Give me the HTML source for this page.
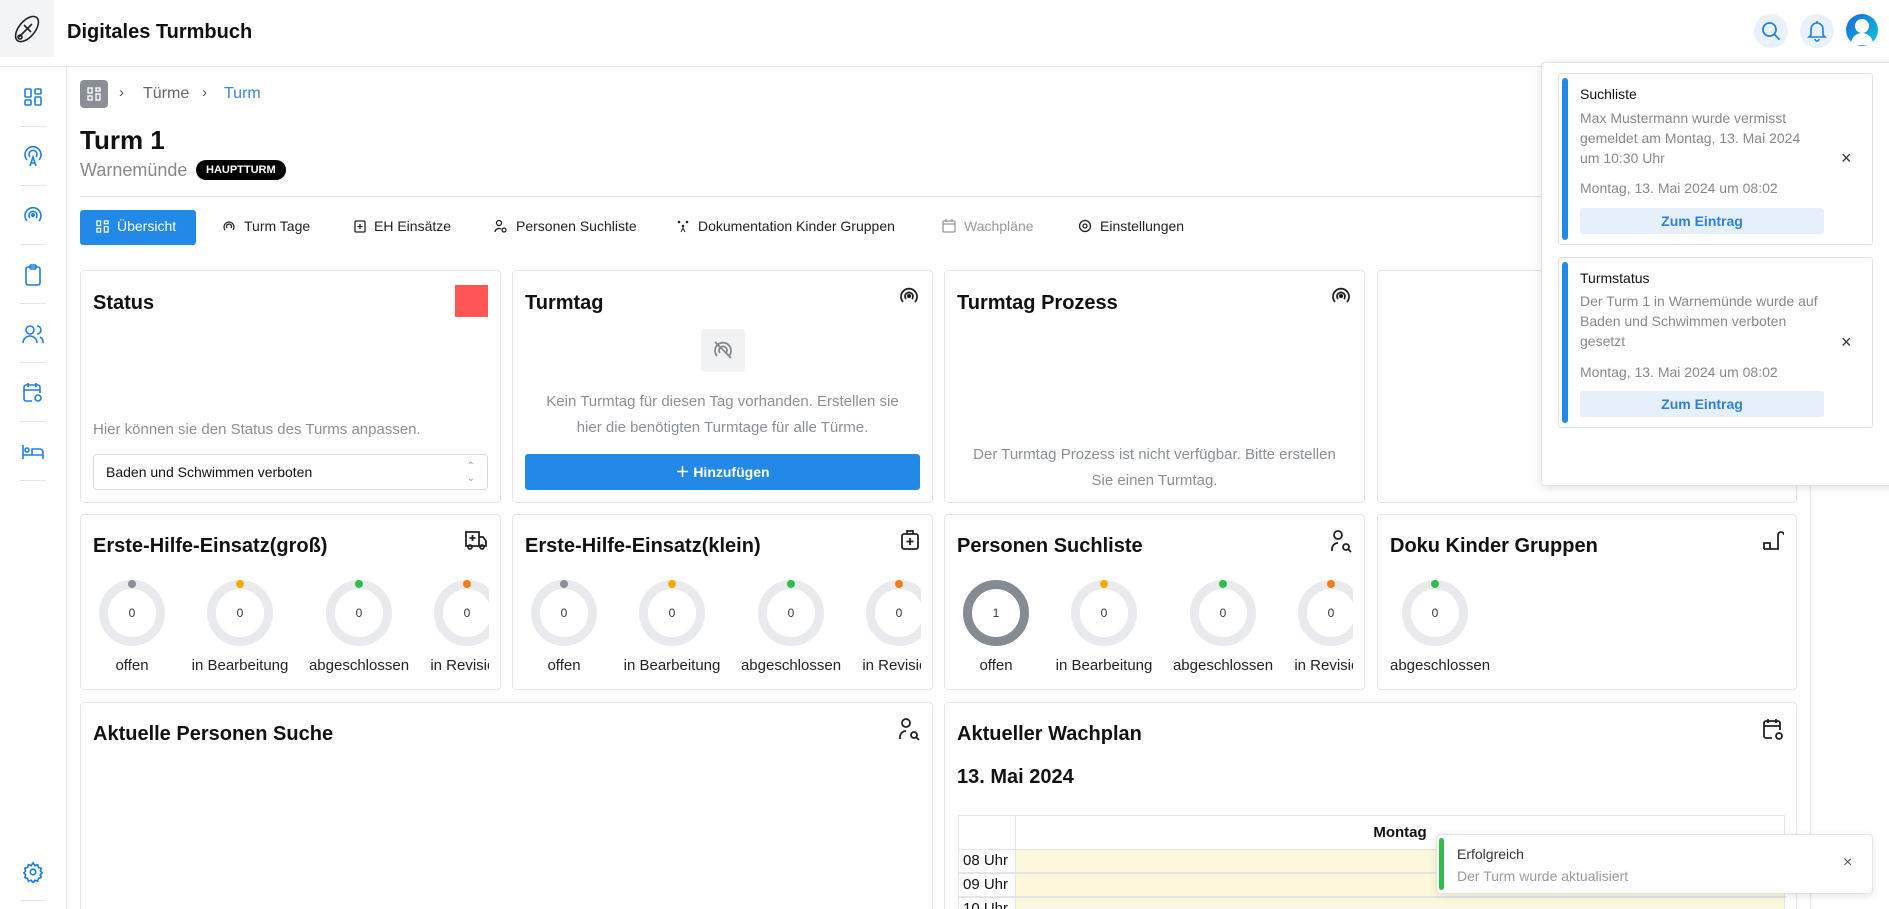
<!DOCTYPE html>
<html><head><meta charset="utf-8"><style>
*{box-sizing:border-box;margin:0;padding:0}
html{width:1889px;height:909px;overflow:hidden}
body{width:1889px;height:909px;overflow:hidden;background:#fff;font-family:"Liberation Sans",sans-serif;color:#111;position:relative}
.a{position:absolute}
.card{position:absolute;border:1px solid #e3e5e8;border-radius:4px;background:#fff;overflow:hidden}
.ct{position:absolute;left:12px;top:20px;font-size:20px;font-weight:bold}
.ic{position:absolute;right:12px;top:14px}
.muted{color:#8a8f96}
.donut{position:absolute;width:66px;height:66px;border-radius:50%;border:9px solid #e8eaed;text-align:center;line-height:48px;font-size:12px;color:#333}
.dot{position:absolute;width:8px;height:8px;border-radius:50%;left:20px;top:-9px}
.lab{position:absolute;font-size:15px;color:#222;white-space:nowrap;transform:translateX(-50%)}
.sep{position:absolute;left:20px;width:26px;height:1px;background:#e3e5e8}
.tab{position:absolute;top:218px;font-size:14px;color:#222;display:flex;align-items:center;gap:8px}
svg{display:block}
</style></head><body>
<div class="a" style="left:0;top:0;width:54px;height:57px;background:#f3f4f6"></div>
<svg class="a" style="left:10px;top:12px" width="34" height="34" viewBox="0 0 34 34" fill="none" stroke="#222" stroke-width="1.6"><ellipse cx="17" cy="17" rx="8" ry="15" transform="rotate(40 17 17)"/><path d="M12 22l10-10M14 13l7 7M9 25l3-3"/><circle cx="10" cy="25" r="2"/></svg>
<div class="a" style="left:67px;top:21px;font-size:20px;font-weight:bold">Digitales Turmbuch</div>
<div class="a" style="left:0;top:66px;width:1889px;height:1px;background:#e3e5e8"></div>
<div class="a" style="left:1754px;top:14px;width:34px;height:34px;border-radius:50%;background:#e8f1fc"></div>
<svg class="a" style="left:1761px;top:21px" width="20" height="20" viewBox="0 0 20 20" fill="none" stroke="#1e7fe0" stroke-width="1.8"><circle cx="8.5" cy="8.5" r="6.5"/><path d="M13.5 13.5l5 5"/></svg>
<div class="a" style="left:1800px;top:14px;width:34px;height:34px;border-radius:50%;background:#e8f1fc"></div>
<svg class="a" style="left:1807px;top:20px" width="20" height="22" viewBox="0 0 20 22" fill="none" stroke="#1e7fe0" stroke-width="1.6"><path d="M4 15V9a6 6 0 0112 0v6l2 2H2z"/><path d="M8 19a2 2 0 004 0M10 1v2"/></svg>
<div class="a" style="left:1846px;top:14px;width:32px;height:32px;border-radius:50%;background:linear-gradient(135deg,#1565e0,#14c8d8)"></div>
<div class="a" style="left:1855px;top:19px;width:14px;height:14px;border-radius:50%;background:#fff"></div>
<div class="a" style="left:1851px;top:33px;width:22px;height:12px;border-radius:11px 11px 0 0;background:#fff"></div>
<div class="a" style="left:66px;top:67px;width:1px;height:842px;background:#e3e5e8"></div>
<svg class="a" style="left:23px;top:87px" width="20" height="20" viewBox="0 0 20 20" fill="none" stroke="#1e7fe0" stroke-width="1.6"><rect x="2" y="2" width="6" height="8" rx="1"/><rect x="12" y="2" width="6" height="5" rx="1"/><rect x="2" y="13" width="6" height="5" rx="1"/><rect x="12" y="10" width="6" height="8" rx="1"/></svg>
<div class="sep" style="top:126px"></div>
<svg class="a" style="left:22px;top:145px" width="22" height="22" viewBox="0 0 22 22" fill="none" stroke="#1e7fe0" stroke-width="1.6"><path d="M5 15a8 8 0 1112 0M8 12a4 4 0 116 0"/><path d="M8 21l3-9 3 9M9 18h4"/></svg>
<div class="sep" style="top:185px"></div>
<svg class="a" style="left:22px;top:204px" width="22" height="22" viewBox="0 0 22 22" fill="none" stroke="#1e7fe0" stroke-width="1.6"><path d="M5 17a8 8 0 1112 0M8 14a4 4 0 116 0"/><circle cx="11" cy="11" r="1.3" fill="#1e7fe0"/></svg>
<div class="sep" style="top:244px"></div>
<svg class="a" style="left:24px;top:264px" width="18" height="22" viewBox="0 0 18 22" fill="none" stroke="#1e7fe0" stroke-width="1.6"><rect x="2" y="3" width="14" height="18" rx="2"/><rect x="6" y="1" width="6" height="4" rx="1"/></svg>
<div class="sep" style="top:303px"></div>
<svg class="a" style="left:22px;top:323px" width="22" height="22" viewBox="0 0 22 22" fill="none" stroke="#1e7fe0" stroke-width="1.6"><circle cx="8" cy="7" r="4"/><path d="M1 20a7 7 0 0114 0M15 3a4 4 0 010 8M18 14a6 6 0 013 6"/></svg>
<div class="sep" style="top:362px"></div>
<svg class="a" style="left:22px;top:382px" width="22" height="22" viewBox="0 0 22 22" fill="none" stroke="#1e7fe0" stroke-width="1.6"><path d="M10 19H4a2 2 0 01-2-2V5a2 2 0 012-2h12a2 2 0 012 2v6M2 8h16M6 1v4M14 1v4"/><circle cx="16" cy="16" r="3"/></svg>
<div class="sep" style="top:421px"></div>
<svg class="a" style="left:21px;top:443px" width="24" height="18" viewBox="0 0 24 18" fill="none" stroke="#1e7fe0" stroke-width="1.6"><path d="M2 2v14M2 12h20v4M22 12V9a3 3 0 00-3-3h-8v6"/><circle cx="6" cy="7" r="2"/></svg>
<div class="sep" style="top:480px"></div>
<svg class="a" style="left:22px;top:861px" width="22" height="22" viewBox="0 0 24 24" fill="none" stroke="#1e7fe0" stroke-width="1.8"><circle cx="12" cy="12" r="3"/><path d="M12 2l2 3 3-1 1 3 3 1-1 3 2 2-2 2 1 3-3 1-1 3-3-1-2 3-2-3-3 1-1-3-3-1 1-3-2-2 2-2-1-3 3-1 1-3 3 1z"/></svg>
<div class="sep" style="top:900px"></div>
<div class="a" style="left:80px;top:80px;width:28px;height:28px;border-radius:4px;background:#8a8f96"></div>
<svg class="a" style="left:87px;top:87px" width="14" height="14" viewBox="0 0 14 14" fill="none" stroke="#fff" stroke-width="1.3"><rect x="1" y="1" width="4" height="5"/><rect x="9" y="1" width="4" height="3"/><rect x="1" y="9" width="4" height="4"/><rect x="9" y="7" width="4" height="6"/></svg>
<div class="a" style="left:119px;top:84px;font-size:15px;color:#555">›</div>
<div class="a" style="left:143px;top:85px;font-size:16px;color:#666">Türme</div>
<div class="a" style="left:202px;top:84px;font-size:15px;color:#555">›</div>
<div class="a" style="left:224px;top:85px;font-size:16px;color:#3b82d6">Turm</div>
<div class="a" style="left:80px;top:125px;font-size:26px;font-weight:bold">Turm 1</div>
<div class="a" style="left:80px;top:160px;font-size:18px;color:#888">Warnemünde</div>
<div class="a" style="left:196px;top:160px;height:20px;padding:0 10px;border-radius:10px;background:#000;color:#fff;font-size:11px;font-weight:bold;line-height:20px">HAUPTTURM</div>
<div class="a" style="left:80px;top:196px;width:1716px;height:1px;background:#e3e5e8"></div>
<div class="a" style="left:80px;top:210px;width:116px;height:35px;border-radius:3px;background:#2289e6"></div>
<div class="tab" style="left:96px;color:#fff"><svg width="13" height="13" viewBox="0 0 14 14" fill="none" stroke="#fff" stroke-width="1.3"><rect x="1" y="1" width="4" height="5"/><rect x="9" y="1" width="4" height="3"/><rect x="1" y="9" width="4" height="4"/><rect x="9" y="7" width="4" height="6"/></svg>Übersicht</div>
<div class="tab" style="left:222px"><svg width="14" height="14" viewBox="0 0 14 14" fill="none" stroke="#222" stroke-width="1.3"><path d="M3 11a5 5 0 118 0M5 9a2.5 2.5 0 114 0"/></svg>Turm Tage</div>
<div class="tab" style="left:354px"><svg width="12" height="14" viewBox="0 0 12 14" fill="none" stroke="#222" stroke-width="1.3"><rect x="1" y="2" width="10" height="11" rx="1"/><path d="M6 5v5M3.5 7.5h5"/></svg>EH Einsätze</div>
<div class="tab" style="left:494px"><svg width="14" height="14" viewBox="0 0 14 14" fill="none" stroke="#222" stroke-width="1.3"><circle cx="5" cy="4" r="2.5"/><path d="M1 13a4 4 0 016-3"/><circle cx="10" cy="11" r="2"/></svg>Personen Suchliste</div>
<div class="tab" style="left:676px"><svg width="14" height="14" viewBox="0 0 14 14" fill="#222"><circle cx="3" cy="3" r="1.3"/><circle cx="11" cy="3" r="1.3"/><circle cx="7" cy="7" r="1.3"/><path d="M5 13l2-4 2 4" stroke="#222" fill="none"/></svg>Dokumentation Kinder Gruppen</div>
<div class="tab" style="left:942px;color:#999"><svg width="14" height="14" viewBox="0 0 14 14" fill="none" stroke="#999" stroke-width="1.3"><rect x="1" y="2" width="12" height="11" rx="1"/><path d="M1 5h12M4 0v3M10 0v3"/></svg>Wachpläne</div>
<div class="tab" style="left:1078px"><svg width="14" height="14" viewBox="0 0 14 14" fill="none" stroke="#222" stroke-width="1.3"><circle cx="7" cy="7" r="2"/><circle cx="7" cy="7" r="5.5"/></svg>Einstellungen</div>
<div class="card" style="left:80px;top:270px;width:421px;height:233px">
 <div class="ct" style="top:21px">Status</div>
 <div class="a" style="left:374px;top:14px;width:33px;height:32px;background:#ff5555"></div>
 <div class="a muted" style="left:12px;top:150px;font-size:15px">Hier können sie den Status des Turms anpassen.</div>
 <div class="a" style="left:12px;top:183px;width:395px;height:36px;border:1px solid #d5d8dc;border-radius:4px;font-size:14px;line-height:34px;padding-left:12px">Baden und Schwimmen verboten<span style="position:absolute;right:12px;color:#999;font-size:10px;line-height:12px;top:6px">⌃<br>⌄</span></div>
</div>
<div class="card" style="left:512px;top:270px;width:421px;height:233px">
 <div class="ct" style="top:21px">Turmtag</div>
 <svg class="ic" width="22" height="22" viewBox="0 0 22 22" fill="none" stroke="#222" stroke-width="1.8"><path d="M5 17a8 8 0 1112 0M8 14a4 4 0 116 0"/><circle cx="11" cy="11" r="1.3" fill="#222"/></svg>
 <div class="a" style="left:188px;top:58px;width:44px;height:43px;background:#f1f2f4;border-radius:3px"></div>
 <svg class="a" style="left:199px;top:68px" width="22" height="22" viewBox="0 0 22 22" fill="none" stroke="#888" stroke-width="1.8"><path d="M5 17a8 8 0 1112 0M8 14a4 4 0 116 0M3 3l16 16"/></svg>
 <div class="a muted" style="left:0;width:419px;top:118px;text-align:center;font-size:15px;line-height:26px">Kein Turmtag für diesen Tag vorhanden. Erstellen sie<br>hier die benötigten Turmtage für alle Türme.</div>
 <div class="a" style="left:12px;top:183px;width:395px;height:36px;background:#2289e6;border-radius:3px;color:#fff;font-size:14px;font-weight:bold;text-align:center;line-height:36px">＋ Hinzufügen</div>
</div>
<div class="card" style="left:944px;top:270px;width:421px;height:233px">
 <div class="ct" style="top:21px">Turmtag Prozess</div>
 <svg class="ic" width="22" height="22" viewBox="0 0 22 22" fill="none" stroke="#222" stroke-width="1.8"><path d="M5 17a8 8 0 1112 0M8 14a4 4 0 116 0"/><circle cx="11" cy="11" r="1.3" fill="#222"/></svg>
 <div class="a muted" style="left:0;width:419px;top:171px;text-align:center;font-size:15px;line-height:26px">Der Turmtag Prozess ist nicht verfügbar. Bitte erstellen<br>Sie einen Turmtag.</div>
</div>
<div class="card" style="left:1377px;top:270px;width:420px;height:233px"></div>
<div class="card" style="left:80px;top:514px;width:421px;height:176px">
 <div class="ct" style="top:20px">Erste-Hilfe-Einsatz(groß)</div>
 <svg class="ic" width="24" height="22" viewBox="0 0 24 22" fill="none" stroke="#222" stroke-width="1.8"><path d="M2 3h13v14H2zM15 8h4l3 4v5h-7"/><circle cx="6" cy="18" r="2"/><circle cx="18" cy="18" r="2"/><path d="M8.5 6v6M5.5 9h6"/></svg>
 <div class="donut" style="left:18px;top:65px">0<span class="dot" style="background:#8a8f96"></span></div>
 <div class="donut" style="left:126px;top:65px">0<span class="dot" style="background:#f5a800"></span></div>
 <div class="donut" style="left:245px;top:65px">0<span class="dot" style="background:#2ebd4b"></span></div>
 <div class="donut" style="left:353px;top:65px">0<span class="dot" style="background:#f77b17"></span></div>
 <div class="lab" style="left:51px;top:142px">offen</div>
 <div class="lab" style="left:159px;top:142px">in Bearbeitung</div>
 <div class="lab" style="left:278px;top:142px">abgeschlossen</div>
 <div class="lab" style="left:386px;top:142px">in Revision</div>
 <div class="a" style="left:408px;top:50px;width:12px;height:120px;background:#fff"></div>
</div>
<div class="card" style="left:512px;top:514px;width:421px;height:176px">
 <div class="ct" style="top:20px">Erste-Hilfe-Einsatz(klein)</div>
 <svg class="ic" width="20" height="22" viewBox="0 0 20 22" fill="none" stroke="#222" stroke-width="1.8"><rect x="2" y="5" width="16" height="15" rx="2"/><path d="M7 5V2h6v3M10 9v7M6.5 12.5h7"/></svg>
 <div class="donut" style="left:18px;top:65px">0<span class="dot" style="background:#8a8f96"></span></div>
 <div class="donut" style="left:126px;top:65px">0<span class="dot" style="background:#f5a800"></span></div>
 <div class="donut" style="left:245px;top:65px">0<span class="dot" style="background:#2ebd4b"></span></div>
 <div class="donut" style="left:353px;top:65px">0<span class="dot" style="background:#f77b17"></span></div>
 <div class="lab" style="left:51px;top:142px">offen</div>
 <div class="lab" style="left:159px;top:142px">in Bearbeitung</div>
 <div class="lab" style="left:278px;top:142px">abgeschlossen</div>
 <div class="lab" style="left:386px;top:142px">in Revision</div>
 <div class="a" style="left:408px;top:50px;width:12px;height:120px;background:#fff"></div>
</div>
<div class="card" style="left:944px;top:514px;width:421px;height:176px">
 <div class="ct" style="top:20px">Personen Suchliste</div>
 <svg class="ic" width="22" height="24" viewBox="0 0 22 24" fill="none" stroke="#222" stroke-width="1.8"><circle cx="8" cy="6" r="4"/><path d="M2 22v-2a6 6 0 016-6"/><circle cx="16" cy="18" r="3"/><path d="M18 20l3 3"/></svg>
 <div class="donut" style="left:18px;top:65px;border-color:#858b93">1</div>
 <div class="donut" style="left:126px;top:65px">0<span class="dot" style="background:#f5a800"></span></div>
 <div class="donut" style="left:245px;top:65px">0<span class="dot" style="background:#2ebd4b"></span></div>
 <div class="donut" style="left:353px;top:65px">0<span class="dot" style="background:#f77b17"></span></div>
 <div class="lab" style="left:51px;top:142px">offen</div>
 <div class="lab" style="left:159px;top:142px">in Bearbeitung</div>
 <div class="lab" style="left:278px;top:142px">abgeschlossen</div>
 <div class="lab" style="left:386px;top:142px">in Revision</div>
 <div class="a" style="left:408px;top:50px;width:12px;height:120px;background:#fff"></div>
</div>
<div class="card" style="left:1377px;top:514px;width:420px;height:176px">
 <div class="ct" style="top:20px">Doku Kinder Gruppen</div>
 <svg class="ic" width="22" height="22" viewBox="0 0 22 22" fill="none" stroke="#222" stroke-width="1.8"><path d="M2 20h14V6a3 3 0 016 0M2 20v-6h6v6"/></svg>
 <div class="donut" style="left:24px;top:65px">0<span class="dot" style="background:#2ebd4b"></span></div>
 <div class="a" style="left:12px;top:142px;font-size:15px;color:#222">abgeschlossen</div>
</div>
<div class="card" style="left:80px;top:702px;width:853px;height:300px">
 <div class="ct" style="top:20px">Aktuelle Personen Suche</div>
 <svg class="ic" width="22" height="24" viewBox="0 0 22 24" fill="none" stroke="#222" stroke-width="1.8"><circle cx="8" cy="6" r="4"/><path d="M2 22v-2a6 6 0 016-6"/><circle cx="16" cy="18" r="3"/><path d="M18 20l3 3"/></svg>
</div>
<div class="card" style="left:944px;top:702px;width:853px;height:300px">
 <div class="ct" style="top:20px">Aktueller Wachplan</div>
 <svg class="ic" width="22" height="24" viewBox="0 0 22 24" fill="none" stroke="#222" stroke-width="1.8"><path d="M10 21H4a2 2 0 01-2-2V6a2 2 0 012-2h12a2 2 0 012 2v7M2 9h16M6 2v4M14 2v4"/><circle cx="17" cy="19" r="3"/></svg>
 <div class="a" style="left:12px;top:63px;font-size:20px;font-weight:bold">13. Mai 2024</div>
 <div class="a" style="left:13px;top:112px;width:827px;height:180px;border:1px solid #e3e5e8">
  <div class="a" style="left:56px;top:0;width:1px;height:180px;background:#e3e5e8"></div>
  <div class="a" style="left:57px;top:0;right:0;height:33px;text-align:center;font-weight:bold;font-size:15px;line-height:33px">Montag</div>
  <div class="a" style="left:0;top:33px;width:827px;height:1px;background:#e3e5e8"></div>
  <div class="a" style="left:57px;top:34px;right:0;height:22px;background:#fdf8dc"></div>
  <div class="a" style="left:0;top:56px;width:827px;height:2px;background:#e3e5e8"></div>
  <div class="a" style="left:57px;top:58px;right:0;height:22px;background:#fdf8dc"></div>
  <div class="a" style="left:0;top:80px;width:827px;height:2px;background:#e3e5e8"></div>
  <div class="a" style="left:57px;top:82px;right:0;height:100px;background:#fdf8dc"></div>
  <div class="a" style="left:4px;top:36px;font-size:15px">08 Uhr</div>
  <div class="a" style="left:4px;top:60px;font-size:15px">09 Uhr</div>
  <div class="a" style="left:4px;top:84px;font-size:15px">10 Uhr</div>
 </div>
</div>
<div class="a" style="left:1810px;top:67px;width:1px;height:842px;background:#e3e5e8"></div>
<div class="a" style="left:1541px;top:62px;width:360px;height:424px;background:#fff;border:1px solid #e3e5e8;border-radius:4px;box-shadow:0 2px 10px rgba(0,0,0,.12)"></div>
<div class="a" style="left:1558px;top:73px;width:315px;height:172px;border:1px solid #e0e2e5;border-radius:3px"></div>
<div class="a" style="left:1562px;top:78px;width:6px;height:162px;background:#2289e6;border-radius:3px"></div>
<div class="a" style="left:1580px;top:86px;font-size:14px">Suchliste</div>
<div class="a" style="left:1580px;top:108px;font-size:14px;color:#888;line-height:20px">Max Mustermann wurde vermisst<br>gemeldet am Montag, 13. Mai 2024<br>um 10:30 Uhr</div>
<div class="a" style="left:1580px;top:180px;font-size:14px;color:#888">Montag, 13. Mai 2024 um 08:02</div>
<div class="a" style="left:1580px;top:208px;width:244px;height:26px;background:#e6f0fb;border-radius:3px;color:#2f7fd6;font-size:14px;font-weight:bold;text-align:center;line-height:26px">Zum Eintrag</div>
<div class="a" style="left:1841px;top:148px;font-size:18px;color:#333">×</div>
<div class="a" style="left:1558px;top:257px;width:315px;height:171px;border:1px solid #e0e2e5;border-radius:3px"></div>
<div class="a" style="left:1562px;top:262px;width:6px;height:161px;background:#2289e6;border-radius:3px"></div>
<div class="a" style="left:1580px;top:270px;font-size:14px">Turmstatus</div>
<div class="a" style="left:1580px;top:291px;font-size:14px;color:#888;line-height:20px">Der Turm 1 in Warnemünde wurde auf<br>Baden und Schwimmen verboten<br>gesetzt</div>
<div class="a" style="left:1580px;top:364px;font-size:14px;color:#888">Montag, 13. Mai 2024 um 08:02</div>
<div class="a" style="left:1580px;top:391px;width:244px;height:26px;background:#e6f0fb;border-radius:3px;color:#2f7fd6;font-size:14px;font-weight:bold;text-align:center;line-height:26px">Zum Eintrag</div>
<div class="a" style="left:1841px;top:332px;font-size:18px;color:#333">×</div>
<div class="a" style="left:1436px;top:834px;width:437px;height:60px;background:#fff;border:1px solid #e3e5e8;border-radius:4px;box-shadow:0 2px 8px rgba(0,0,0,.1)"></div>
<div class="a" style="left:1439px;top:838px;width:5px;height:52px;background:#2ebd4b;border-radius:3px"></div>
<div class="a" style="left:1457px;top:846px;font-size:14px;color:#333">Erfolgreich</div>
<div class="a" style="left:1457px;top:868px;font-size:14px;color:#999">Der Turm wurde aktualisiert</div>
<div class="a" style="left:1843px;top:854px;font-size:16px;color:#555">×</div>
</body></html>
